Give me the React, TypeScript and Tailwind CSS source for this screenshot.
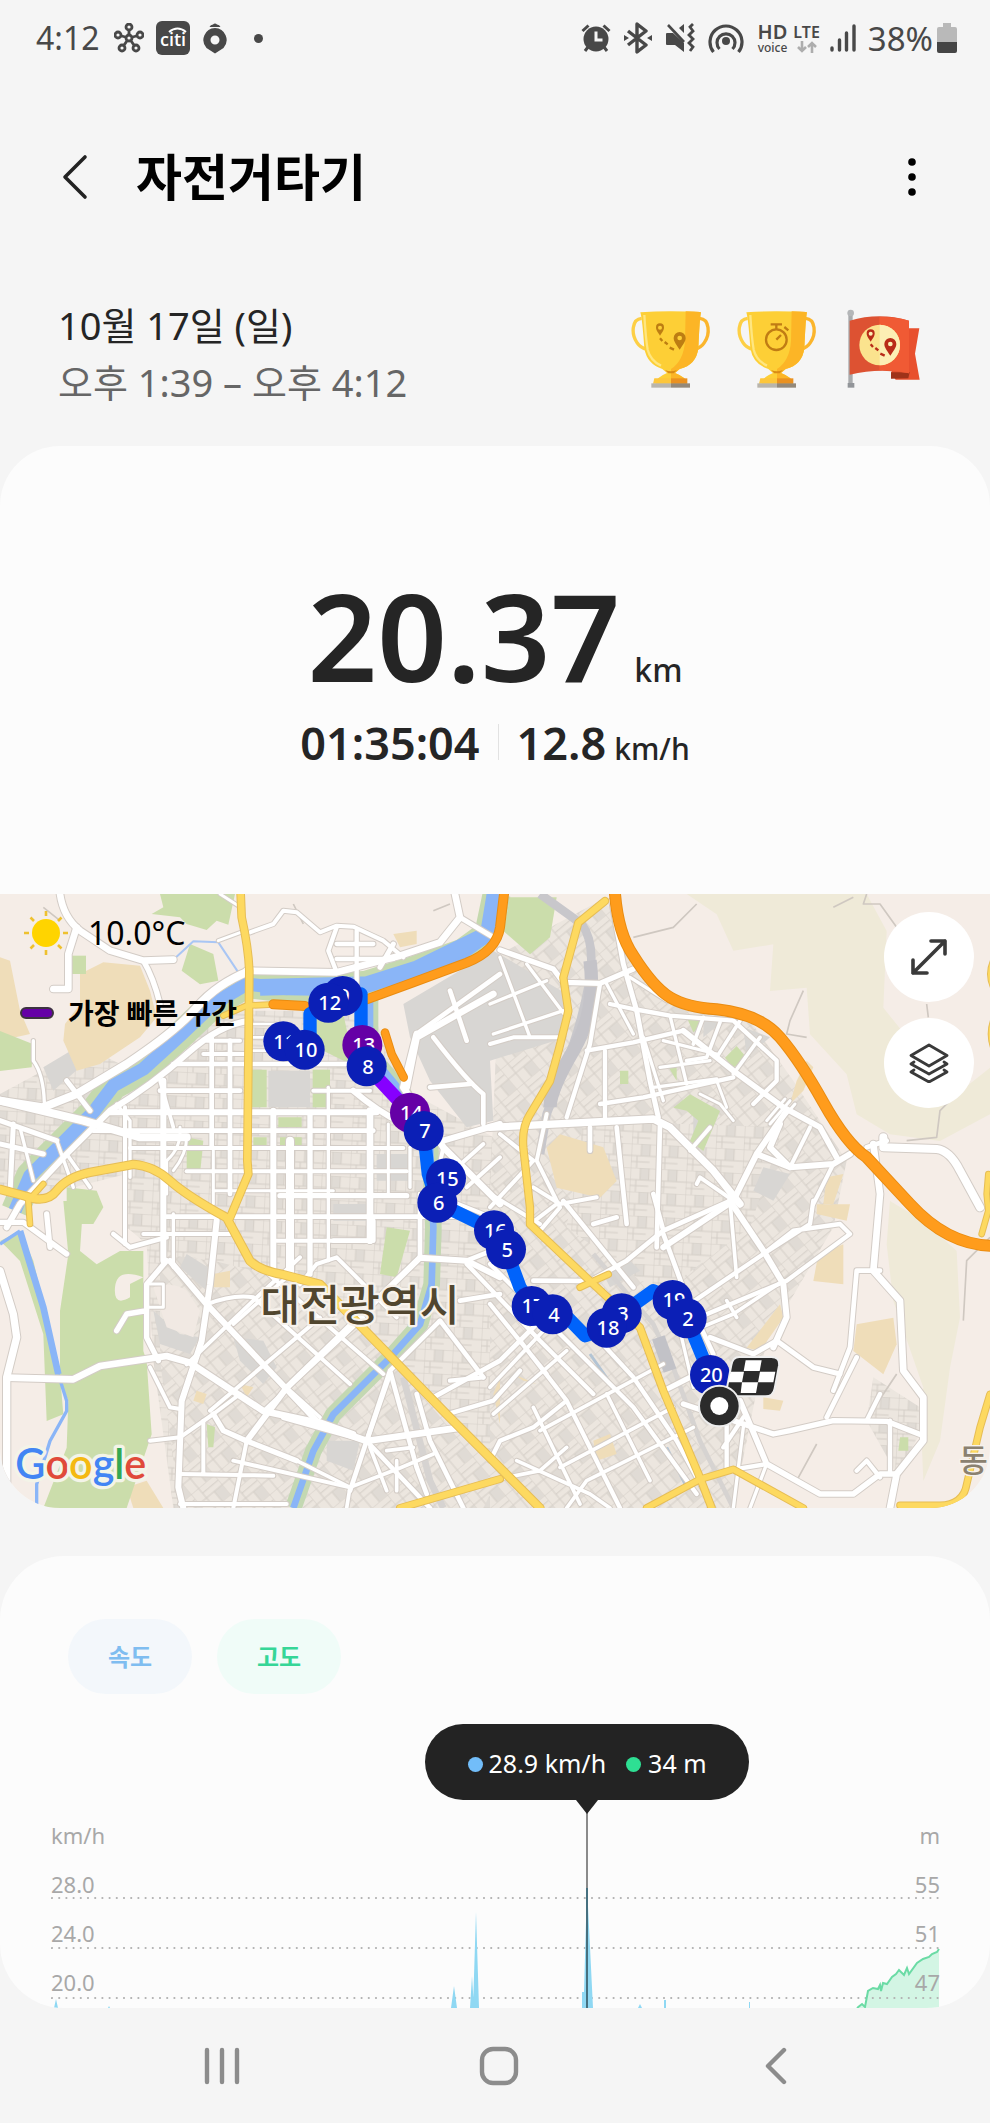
import React from "react";

const SANS = "font-['Noto_Sans','Noto_Sans_CJK_KR',sans-serif]";

/* ---------- status bar icons ---------- */

function HubIcon() {
  const tips = [[15, 4], [26, 12], [22, 25], [8, 25], [4, 12]];
  return (
    <svg viewBox="0 0 30 30" className="size-[30px]" fill="none" stroke="#484848" strokeWidth="2.8" aria-hidden="true">
      {tips.map(([x, y]) => (
        <g key={x}>
          <path d={`M15 15L${x} ${y}`} />
          <circle cx={x} cy={y} r="3" fill="#f5f5f5" />
        </g>
      ))}
      <circle cx="15" cy="15" r="3" fill="#f5f5f5" />
    </svg>
  );
}

function CitiIcon() {
  return (
    <svg viewBox="0 0 34 34" className="size-[34px]" aria-hidden="true">
      <rect width="34" height="34" rx="6" fill="#484848" />
      <text x="17" y="25" textAnchor="middle" fontSize="18" fontWeight="600" fill="#fff" fontFamily="Open Sans, sans-serif">citi</text>
      <path d="M13 11Q21.500 4 30 11" fill="none" stroke="#fff" strokeWidth="2" />
    </svg>
  );
}

function PinIcon() {
  return (
    <svg viewBox="0 0 26 32" className="h-[32px] w-[26px]" fill="#484848" aria-hidden="true">
      <path fillRule="evenodd" d="M13 6a12 12 0 0 1 8.500 20L13 31.500 4.500 26A12 12 0 0 1 13 6zm0 7.500a4.500 4.500 0 1 0 0 9 4.500 4.500 0 0 0 0-9z" />
      <path d="M7.500 5Q8.500 2.500 11 2.500 13 .5 15 2.500q2.500 0 3.500 2.500z" />
    </svg>
  );
}

function AlarmIcon() {
  return (
    <svg viewBox="0 0 30 30" className="size-[30px]" aria-hidden="true">
      <path d="M1.500 8l6-5.500M28.500 8l-6-5.500M7 24l-3 4M23 24l3 4" stroke="#484848" strokeWidth="3" />
      <circle cx="15" cy="16" r="12.500" fill="#484848" />
      <path d="M15 8.500v8.500h6.500" fill="none" stroke="#f5f5f5" strokeWidth="3" />
    </svg>
  );
}

function BluetoothIcon() {
  return (
    <svg viewBox="0 0 28 32" className="h-[32px] w-[28px]" aria-hidden="true">
      <path d="M4 9l18 14-9 7V2l9 7L4 23" fill="none" stroke="#484848" strokeWidth="3.400" strokeLinejoin="round" />
      <path d="M0 13l5 3-5 3zM28 13l-5 3 5 3z" fill="#484848" />
    </svg>
  );
}

function MuteIcon() {
  return (
    <svg viewBox="0 0 30 30" className="size-[30px]" fill="none" stroke="#484848" aria-hidden="true">
      <path d="M2 10h6L19 20v9l-9-7H2q-1 0-1-1V11q0-1 1-1zM19 1v9l-5-5z" fill="#484848" stroke="none" />
      <path d="M3 2l16 17" strokeWidth="2.600" />
      <path d="M28 1l-3 3 3 4-4 4 4 4-4 4 4 4-3 4" strokeWidth="2.800" />
    </svg>
  );
}

function HotspotIcon() {
  return (
    <svg viewBox="0 0 36 32" className="h-[32px] w-[36px]" fill="none" stroke="#484848" strokeWidth="3.200" aria-hidden="true">
      <path d="M5.500 30a16 16 0 1 1 25 0" />
      <path d="M11.500 27a9 9 0 1 1 13 0" />
      <circle cx="18" cy="19" r="4" fill="#484848" stroke="none" />
    </svg>
  );
}

function SignalIcon() {
  return (
    <svg viewBox="0 0 26 28" className="h-[28px] w-[26px]" stroke="#484848" strokeWidth="3.400" strokeLinecap="round" aria-hidden="true">
      <path d="M2 24v2M9.500 16v10M16.500 9v17M24 2v24" />
    </svg>
  );
}

function BatteryIcon() {
  return (
    <svg viewBox="0 0 20 30" className="h-[30px] w-[20px]" aria-hidden="true">
      <path d="M6 0h8v4h4a2 2 0 0 1 2 2v13H0V6a2 2 0 0 1 2-2h4z" fill="#b9b9b9" />
      <path d="M0 19h20v9a2 2 0 0 1-2 2H2a2 2 0 0 1-2-2z" fill="#454545" />
    </svg>
  );
}

function StatusBar() {
  return (
    <div className="flex h-[76px] items-center justify-between pl-[36px] pr-[33px] text-[#484848]">
      <div className="flex items-center">
        <span className="text-[32px] leading-none">4:12</span>
        <div className="ml-[14px] flex items-center gap-[12px]">
          <HubIcon />
          <CitiIcon />
          <PinIcon />
          <span className="ml-[14px] size-[9px] rounded-full bg-[#484848]" />
        </div>
      </div>
      <div className="flex items-center">
        <div className="flex items-center gap-[13px]">
          <AlarmIcon />
          <BluetoothIcon />
          <MuteIcon />
          <HotspotIcon />
        </div>
        <div className="ml-[14px] flex flex-col items-center">
          <span className="text-[20px] leading-[20px] font-semibold">HD</span>
          <span className="text-[12px] leading-[12px] font-medium">voice</span>
        </div>
        <div className="ml-[6px] flex flex-col items-center">
          <span className="text-[16px] leading-[17px] font-semibold">LTE</span>
          <svg viewBox="0 0 20 12" className="h-[12px] w-[20px]" fill="none" stroke="#adadad" strokeWidth="2.600" aria-hidden="true">
            <path d="M5 0v10M1 6l4 4 4-4M15 12V2M11 6l4-4 4 4" />
          </svg>
        </div>
        <span className="ml-[10px]"><SignalIcon /></span>
        <span className="ml-[12px] mr-[4px] text-[33px] leading-none">38%</span>
        <BatteryIcon />
      </div>
    </div>
  );
}

/* ---------- awards ---------- */

function RouteMark({ color, hole }: { color: string; hole: string }) {
  return (
    <g fill={color}>
      <path d="M87 80c-9-13-12-18-12-25a12 12 0 0 1 24 0c0 7-3 12-12 25z" />
      <circle cx="87" cy="56" r="6" fill={hole} />
      <path d="M146 122c-13-19-18-26-18-35a18 18 0 0 1 36 0c0 9-5 16-18 35z" />
      <circle cx="146" cy="87" r="7" fill={hole} />
      <path d="M87 88l7 8M101 99l9 7M116 116l13 6" stroke={color} strokeWidth="7" />
    </g>
  );
}

function Trophy({ children }: { children: React.ReactNode }) {
  return (
    <svg viewBox="0 0 240 240" className="size-[80px]" aria-hidden="true">
      <g fill="none" strokeWidth="10">
        <path d="M32 28C2 30 0 75 18 101q10 16 30 20" stroke="#fdcf45" />
        <path d="M206 28c30 2 32 47 14 73q-10 16-30 20" stroke="#fbb52c" />
      </g>
      <path d="M28 10q90-6 182 0-4 16-8 108-6 50-56 62l-14 12q36 14 36 32H74q0-18 34-32l-14-12q-46-14-54-62Q34 30 28 10z" fill="#fdcf36" />
      <path d="M164 7q30 0 46 3-4 16-8 108-6 50-56 62l-14 12q36 14 36 32h-48v-44q38-24 42-84z" fill="#fcb526" />
      <path d="M40 18q4 70 10 104 8 32 40 48" fill="none" stroke="#fff0a0" strokeWidth="7" opacity=".7" />
      <path d="M102 183q18 8 36 0l-10 10h-16z" fill="#d98c16" />
      <path d="M70 208h50v16H66z" fill="#fdc63a" />
      <path d="M120 208h49v16h-49z" fill="#ea9120" />
      <path d="M61 223h59v13H61z" fill="#b9b5ac" />
      <path d="M120 223h57v13h-57z" fill="#94897a" />
      {children}
    </svg>
  );
}

function Stopwatch() {
  return (
    <g fill="none" stroke="#c07c14" strokeWidth="7">
      <circle cx="118" cy="92" r="31" />
      <path d="M101 46h34M118 48v12M118 92l14-14M142 54l12 10" />
    </g>
  );
}

function FlagAward() {
  return (
    <svg viewBox="-10 0 240 240" className="size-[80px]" aria-hidden="true">
      <path d="M180 58h39l-13 76 14 78h-72l-14-20z" fill="#e8502e" />
      <path d="M134 190h56l-4 18-52 1z" fill="#9e3219" />
      <rect x="6" y="16" width="13" height="218" fill="#a9abad" />
      <circle cx="13" cy="12" r="10" fill="#b4b6b8" />
      <path d="M4 222h20v14H4z" fill="#929599" />
      <path d="M10 35q90-26 178 0v158q-88-18-178 4z" fill="#dd5232" />
      <path d="M99 24q46-2 89 11v158q-44-10-89-9z" fill="#f05a34" />
      <circle cx="100" cy="108" r="61" fill="#fbe38e" />
      <path d="M100 47a61 61 0 0 1 0 122z" fill="#fceeb4" />
      <g transform="translate(-14 18)">
        <RouteMark color="#b92b18" hole="#fceeb4" />
      </g>
    </svg>
  );
}

/* ---------- map ---------- */

type Road = [path: string, width: number];

const streets: Road[] = [
  // downtown grid
  ["M375 640V1050", 12], ["M490 560V1100", 18], ["M520 960V1120", 10], ["M635 430V760", 14], ["M690 440V900", 14],
  ["M640 770V930", 9], ["M820 650V1130", 18], ["M870 740V1140", 24], ["M930 660V1140", 16], ["M985 580V1100", 10],
  ["M1110 650V1040", 20], ["M1165 690V900", 9], ["M1230 760V880", 10],
  ["M520 510H1040", 14], ["M480 590H720", 14], ["M940 590H1110", 12], ["M330 655H1130", 18], ["M280 710H1120", 14],
  ["M390 762H1210", 12], ["M560 832H1220", 12], ["M640 890H1000", 9], ["M840 905H1220", 16], ["M500 968H1420", 14],
  ["M430 1020H690", 12], ["M830 1040H1110", 12], ["M620 440H720M610 480H735", 12], ["M760 390H830M760 430H800M760 470H800", 8],
  // north-west
  ["M180 0Q190 70 240 110L330 170 430 200 520 197", 20], ["M430 200Q460 250 480 330", 16], ["M230 100L205 180V285H160", 20],
  ["M100 440V500Q130 540 133 625", 10], ["M740 230L1010 235 1200 185 1320 145 1380 70 1365 0", 20],
  ["M750 115L820 90 850 50 890 55 960 115 1010 95 1060 98 1150 140 1210 190", 12], ["M1010 100L985 170 1010 235M1070 110V270M1010 150H1120M1010 195H1180", 13],
  ["M1380 70L1480 130M1140 220L1180 150", 15], ["M660 0L722 40M722 115L655 140", 9],
  ["M750 230Q650 270 590 340T380 510L230 600 130 640 0 620", 24], ["M750 380Q660 390 560 480T330 650L200 780 60 930 20 1000", 18],
  ["M0 620L250 680 420 730 560 730", 24], ["M0 680L170 740M0 750L130 780M40 690L30 900M200 560L270 650", 15],
  ["M350 630L390 680V850M60 700L100 860M170 740L220 880", 10], ["M200 780L270 880M480 560L520 700", 11],
  ["M560 730Q560 780 520 830M540 700Q545 760 500 800V900", 9],
  ["M1060 590Q1130 650 1210 690T1330 740L1500 690", 18], ["M1220 580L1250 430 1480 300M1250 420L1210 580 1330 760 1500 930", 20],
  ["M1250 420L1500 240M1300 430Q1400 560 1450 600V690M1350 290L1400 440M1290 580L1410 570", 14], ["M1330 760L1300 900 1500 980M1360 830L1450 750M1400 880L1500 790", 12],
  // west and south-west
  ["M0 1130L40 1260 50 1330 20 1450 20 1842", 22], ["M0 985H70L200 1080M140 960L150 1060", 16], ["M340 1020L390 1060 500 1030", 14],
  ["M20 1451L220 1456 300 1416 500 1386 570 1406 790 1551 930 1581 1100 1641 1380 1601", 20],
  ["M650 980L630 1171 605 1341 545 1521 535 1780 550 1842", 18], ["M510 1101L620 1231 950 1581 1060 1620", 18],
  ["M500 1100L440 1171V1331L475 1400M350 1310L380 1260 440 1250", 16], ["M450 1170H490V1240H440", 9],
  ["M450 1420L510 1540 540 1545M450 1640L540 1630 640 1560 720 1500", 12], ["M640 1560L670 1610 740 1641 890 1700", 16],
  ["M610 1580V1740M740 1641L700 1842M540 1740L820 1745M700 1700L1050 1780M540 1830H860", 12],
  ["M740 1641L860 1481 1260 1091 1400 1100 1500 1150", 18], ["M560 1411L760 1220 900 1090M630 1550L960 1271", 12],
  ["M620 1231Q700 1200 760 1210L1050 1470M760 1100L1150 1440M900 1171L950 1110 1010 1090 1190 1270", 12],
  ["M700 1290L860 1150M790 1551L1090 1271M860 1481L960 1570", 11], ["M850 1571L1100 1641 1290 1842M1100 1641L1170 1440", 14],
  ["M1170 1430L1250 1720 1280 1800M1250 1500L1290 1640 1390 1842M1050 1790L1170 1430 1320 1280 1450 1450", 14],
  ["M1050 1780L1200 1722 1300 1680M1110 1660L1160 1790M890 1700L1050 1780 1040 1842M1160 1670L1240 1660M1190 1700V1790", 11],
  ["M1260 900V1091M1120 980V1040H1000M1400 1100L1500 1060M1380 1220L1500 1200M1300 1510L1500 1400 1640 1260", 14],
  ["M1400 1110L1620 1340 1780 1500M1340 1561L1480 1520 1560 1430M1450 1450L1350 1460", 13],
  // north-east
  ["M1500 168L1660 225 1690 265 1800 268 1900 225", 16], ["M1470 450L1540 430 1690 430", 12], ["M1470 330L1640 260M1480 420L1690 350M1500 190L1590 430M1580 210L1700 370", 10],
  ["M1835 20L1870 210 1910 350 1950 560 1975 670", 15], ["M1800 270L1770 450 1700 670", 13], ["M1830 330L1900 345 2010 365 2200 380 2330 500 2330 560 2260 630", 13],
  ["M1760 470L1900 445 2050 410M1815 470V670M1800 630L1930 610 2200 550", 13], ["M1470 700L1960 675 2010 700 2140 830 2220 930", 22],
  ["M1890 250L2000 320M1820 270L1900 420M1930 430L1990 620M2010 365L2060 570M1990 440L2150 480M1980 520L2130 500M1960 580L2150 555", 10],
  ["M2050 410L2200 530 2350 640 2460 700 2510 790", 17], ["M2110 370L2080 450M2160 385L2120 490 2060 500M2220 380L2150 490M2280 430L2200 540", 11],
  ["M2360 650L2270 780 2200 920 1990 1060M2340 690L2310 760 2370 820M2270 780L2370 820 2500 810 2550 780", 18], ["M2430 700L2370 820M2500 810L2440 930", 12],
  ["M2100 600L2160 630 2200 680M2150 560L2180 640", 9], ["M1850 700L1880 990M1980 690L1970 1060M1770 700V770", 14], ["M2070 770L2130 700M2200 920L2100 850 2090 870", 12],
  ["M2620 750L2640 900 2620 1130 2700 1220 2710 1430 2770 1510V1640L2690 1740 2670 1842", 20], ["M2650 730V760L2810 765Q2850 770 2880 830L2940 940", 24],
  ["M2600 760L2660 740M2570 1130H2640M2570 1130L2550 1360 2500 1490M2570 1390L2480 1570", 14],
  // interchange
  ["M2310 690L2370 620M2325 700L2385 630M2300 680L2355 615", 9],
  // south-east
  ["M1470 900L1620 990M1590 991L1670 930M1640 660L1610 800 1680 940 1620 1010M1500 720L1600 800 1470 940M1600 880L1680 930 1790 910", 12],
  ["M1600 1160L1770 1161 1880 1100 1990 1010 2190 921M1690 921L1900 1180M1990 1010L1960 900M1780 990L1850 970M1990 1020L2060 1210 2140 1380", 14],
  ["M2190 921L2290 1070 2350 1170 2360 1270 2320 1360", 18], ["M2010 1270L2290 1080 2430 990 2440 920M2290 1080L2380 1010 2520 990 2550 1020 2360 1160 2050 1290", 13],
  ["M2080 1310L2200 1260 2350 1160M2190 921L2210 1150M2210 1270L2180 1220", 11], ["M2130 1330L2260 1380 2330 1340 2440 1420 2520 1440", 15],
  ["M1990 1491L2070 1450M2050 1530L2320 1620 2370 1610 2500 1580 2660 1582 2770 1625", 16], ["M2220 1520L2300 1710 2460 1800 2560 1800 2640 1740 2690 1740", 17],
  ["M2180 1590V1730L2300 1710M2170 1660L2230 1570M2600 1580L2640 1500M2670 1580V1740M2570 1730L2600 1700 2640 1750", 13],
  ["M1470 1110L1780 1420 1900 1540 2090 1800M1780 1320L1900 1450 2030 1640 2140 1842", 13], ["M1560 1340L1700 1520 1860 1842M1470 1230L1640 1440M1700 1520L1600 1600 1500 1640 1470 1700", 13],
  ["M1470 1480L1640 1300M1480 1560L1700 1370M1620 1610L1860 1480 1990 1410M1680 1720L2020 1540M1700 1842L1760 1760 2080 1600", 11],
  ["M1600 1540L1740 1830M1820 1500L1950 1760M1550 1700L1770 1800 1830 1842M1470 1760L1620 1730 1700 1660", 11],
  ["M2040 1310L2080 1480M2230 1600L2200 1842M2300 1710L2250 1842", 10],
];

const arterials: Road[] = [
  ["M722 0L725 70Q745 160 748 230L742 800 745 840 690 971", 20],
  ["M0 886L75 906Q140 930 170 890T270 835L400 811Q460 815 510 860T680 971L750 1101Q780 1130 850 1142L960 1171 1340 1561 1620 1842", 22],
  ["M1200 1842L1500 1755", 18],
  ["M1815 21L1735 86 1690 251 1705 351Q1680 460 1650 561L1590 661Q1565 700 1570 761L1590 941V991L1770 1161 1920 1301 1990 1491 2100 1751 2135 1842", 19],
  ["M1940 1842L2100 1756 2200 1726 2410 1842", 17],
  ["M1825 1141L1770 1166 1740 1180", 16],
  ["M2970 1501L2940 1601 2900 1771Q2890 1832 2820 1834H2700", 17],
  ["M90 990L85 920 130 870M670 365L740 335 820 331", 14],
  ["M2980 200Q2962 240 2980 280M2980 380Q2966 420 2980 460M2965 840L2960 900 2965 950 2945 1020", 14],
];

const highways: Road[] = [
  ["M1845 0Q1855 120 1900 185Q1960 280 2010 310T2150 346Q2280 360 2340 430Q2400 500 2470 625T2600 790L2730 930Q2840 1050 2970 1055", 30],
  ["M820 331L915 336M1100 316L1240 265 1400 206Q1490 170 1500 100L1512 0", 24],
  ["M1155 416L1175 481 1211 550", 20],
];

const parks = [
  "M190 921H250L240 1071 290 1111 360 1071H430V1371L440 1401 455 1621 380 1842H130L200 1661 205 1521 180 1461V1251L205 1081z",
  "M0 1041L60 1011 100 1100 180 1441 190 1561 140 1581 130 1321 60 1101 20 1060z",
  "M480 0H705L685 92 650 80 620 108 560 90 540 70 455 60 490 40z",
  "M570 150L640 180 655 260 600 271 545 230z",
  "M0 411L100 451 95 520 0 531z", "M215 185H258V240H215z", "M200 880L290 890 310 940 280 990H200z",
  "M755 527H800V640H740z", "M938 527H990V640H938z", "M925 330L1030 360 1060 500 1040 505 970 470 930 400z",
  "M1530 10H1670L1650 130 1590 181 1510 111z", "M2020 641L2070 601 2160 651 2110 771 2070 741 2095 680 2060 650z",
  "M2175 491L2210 456 2240 491 2200 521z", "M1160 1000L1230 1010 1190 1150 1140 1140z", "M620 1590L645 1600 640 1660 625 1660z",
  "M560 730L610 740 600 840 560 830z", "M835 670H905V700H835zM760 730H800V755H760zM840 730H905V755H840z", "M2060 370H2100V400L2080 415z",
  "M1860 530H1885V570H1860zM2000 510H2030V560z", "M2700 1630H2725V1670H2695z",
];

const sands = [
  "M240 240L310 205 420 215 450 290 470 370 420 430 300 510 230 530 190 440 195 390 240 330z",
  "M0 190L30 200 60 350 90 420 0 440z", "M1640 761L1680 721 1810 760 1850 861 1800 911 1670 881z",
  "M2450 931H2550L2540 980 2450 960z", "M2455 1081L2530 1051V1171L2440 1161z", "M2240 1361L2340 1231 2350 1271 2280 1371z",
  "M2570 1291L2680 1271 2690 1351 2650 1441 2560 1371z", "M2480 850L2530 840 2500 930 2470 930z", "M2420 500L2440 520 2410 590 2370 630 2390 560z",
  "M380 1780L440 1760 490 1842H400z", "M1180 120L1250 110V150L1200 160z", "M640 1140L690 1130V1180H640zM720 1470L760 1480 740 1510zM590 1490L620 1500 610 1530 580 1520z",
  "M1780 1640L1830 1620 1850 1680 1790 1700zM1480 1500L1500 1450V1590z", "M1610 1470L1570 1460 1540 1440z", "M2290 1510L2350 1520 2340 1550 2290 1545z",
];

const terrain = [
  "M2060 0H2600L2660 111 2650 341 2730 441 2710 561 2870 601 2970 521V661L2820 741 2670 721 2570 661 2540 541 2430 421 2420 281 2310 291 2320 151 2200 170 2150 61z",
  "M2670 921L2770 981 2870 1071 2880 1271 2850 1421 2820 1641 2770 1761 2760 1521 2770 1481 2680 1221 2660 1051z",
];

const urban: [string, string][] = [
  ["M380 560L560 400 740 250 760 350 1110 350 1240 600 1500 740 1500 1842 520 1842 460 1400 440 1050 380 1000z", "url(#blocks)"],
  ["M0 600L260 460 380 520 380 840 60 920 0 880z", "url(#blocks)"],
  ["M480 1080L640 1100 960 1180 1500 1740 1450 1842H540L480 1400z", "url(#blocksTilted)"],
  ["M1500 180L1800 20 1860 60 1900 210 2080 350 2250 380 2380 560 2540 800 2500 1000 2300 1340 2200 1842H1470V900z", "url(#blocksTilted)"],
  ["M1750 680L2350 700 2250 1000 1980 1200 1700 1000z", "url(#blocks)"],
  ["M2620 1450L2760 1540V1620L2690 1740 2600 1580z", "url(#blocks)"],
];

const plazas = [
  "M1210 330L1480 170 1700 300V430L1470 500 1480 680 1400 700 1290 560 1230 430z", "M805 530H930V640H805z", "M700 1330L790 1340 830 1420 790 1470 720 1400z",
  "M560 1080L640 1130 620 1190 540 1120z", "M1000 930H1100V980H1000zM1130 780H1230V860H1130z", "M2080 650L2130 640 2120 710 2080 720z",
  "M2230 400L2310 430 2240 490zM2110 370L2170 380 2110 430z", "M2290 820L2370 840 2320 920 2260 890z", "M460 1250L540 1320 600 1330 570 1380 480 1350z",
  "M130 520L230 460 240 520 160 590z", "M980 1640L1080 1640 1060 1730 980 1700z", "M1810 1140L1880 1090 1920 1130 1830 1180z",
];

type Marker = { label: string; x: number; y: number; fast?: boolean };

const markers: Marker[] = [
  { label: "9", x: 1028, y: 306 }, { label: "12", x: 985, y: 326 },
  { label: "11", x: 850, y: 442 }, { label: "10", x: 914, y: 467 },
  { label: "13", x: 1087, y: 453, fast: true }, { label: "8", x: 1100, y: 517 },
  { label: "14", x: 1230, y: 656, fast: true }, { label: "7", x: 1271, y: 711 },
  { label: "15", x: 1338, y: 853 }, { label: "6", x: 1312, y: 926 },
  { label: "16", x: 1482, y: 1009 }, { label: "5", x: 1518, y: 1066 },
  { label: "17", x: 1595, y: 1236 }, { label: "4", x: 1658, y: 1261 },
  { label: "3", x: 1865, y: 1258 }, { label: "18", x: 1820, y: 1301 },
  { label: "19", x: 2018, y: 1218 }, { label: "2", x: 2060, y: 1273 },
  { label: "20", x: 2130, y: 1443 },
];

const river = "M1490 0L1465 120 1390 175 1250 225 1100 272 950 285 860 284 740 270 640 330 540 425 430 525 340 575 280 655 180 755 90 845 45 950";
const stream = "M1110 300V480L1210 600 1290 740 1300 1001 1295 1171 1260 1291 1180 1381 1000 1561 940 1671 880 1842";

function RoadLayer({ roads, casing, fill, edge }: { roads: Road[]; casing: string; fill: string; edge: number }) {
  return (
    <g fill="none" strokeLinejoin="round" strokeLinecap="round">
      <g stroke={casing}>{roads.map(([d, w]) => <path key={d} d={d} strokeWidth={w + edge} />)}</g>
      <g stroke={fill}>{roads.map(([d, w]) => <path key={d} d={d} strokeWidth={w} />)}</g>
    </g>
  );
}

function MapCanvas() {
  return (
    <svg viewBox="0 0 2970 1842" preserveAspectRatio="xMidYMid slice" className="block h-[614px] w-full" role="img" aria-label="대전광역시 자전거 경로 지도">
      <defs>
        <pattern id="blocks" width="84" height="72" patternUnits="userSpaceOnUse" patternTransform="rotate(3)">
          <rect width="84" height="72" fill="#ece6df" />
          <rect x="30" y="0" width="26" height="36" fill="#e0dbd5" />
          <path d="M0 0H84M0 36H84M0 0V72M30 0V36M56 0V36M18 36V72M0 54H56" stroke="#d5cfc8" strokeWidth="3" fill="none" />
        </pattern>
        <pattern id="blocksTilted" width="90" height="76" patternUnits="userSpaceOnUse" patternTransform="rotate(-40)">
          <rect width="90" height="76" fill="#ece6df" />
          <rect x="60" y="38" width="30" height="38" fill="#e0dbd5" />
          <path d="M0 0H90M0 38H90M0 0V76M30 0V76M60 38V76M30 20H90" stroke="#d5cfc8" strokeWidth="3" fill="none" />
        </pattern>
      </defs>
      <rect width="2970" height="1842" fill="#f5ede7" />
      {urban.map(([d, fill]) => <path key={d} d={d} fill={fill} />)}
      <g fill="#efead8">{terrain.map((d) => <path key={d} d={d} />)}</g>
      <g fill="#d8d6d3">{plazas.map((d) => <path key={d} d={d} />)}</g>
      <g fill="#efddb9">{sands.map((d) => <path key={d} d={d} />)}</g>
      <g fill="#cbddab">{parks.map((d) => <path key={d} d={d} />)}</g>
      <path d="M460 1180Q520 1160 560 1190L600 1250 580 1330 500 1300z" fill="#f1e9e3" />
      <path d="M430 1150Q350 1120 345 1180T390 1210V1170L430 1150z" fill="#f5ede7" />

      <g fill="none" strokeLinejoin="round">
        <path d="M1620 0L1745 90Q1790 150 1765 280T1690 530L1640 660 1620 780" stroke="#c8c7cb" strokeWidth="26" />
        <path d="M1770 200Q1790 350 1720 470T1650 640" stroke="#c4c3c8" strokeWidth="40" />
        <path d="M1780 1080L1960 1291 2020 1421 2100 1641 2200 1842" stroke="#d6d3d1" strokeWidth="14" />
        <path d="M1975 1330L2010 1430" stroke="#c2c2c7" strokeWidth="40" />
        <path d="M1210 1450L1290 1760 1330 1842" stroke="#d6d3d1" strokeWidth="20" />
        <path d="M2090 30L2020 100 1900 130M2410 290L2370 380 2360 420 2420 430M2600 0L2590 30 2640 30 2690 100M2500 40L2560 10M2720 740L2810 730 2820 650 2880 590M2780 330L2785 370M2970 1030L2900 1100 2890 1280M2690 1440L2610 1560M2450 1650L2390 1760M880 30L910 90M1300 50L1350 30M130 40L180 80" stroke="#cfc8c1" strokeWidth="5" />
      </g>

      <g fill="none" strokeLinejoin="round">
        <path d={river} stroke="#c5d9ae" strokeWidth="84" />
        <path d={stream} stroke="#c3d8b2" strokeWidth="50" />
        <path d={river} stroke="#8ab5f7" strokeWidth="40" />
        <path d="M1485 0L1465 120 1250 225 1100 272 780 280" stroke="#8ab5f7" strokeWidth="50" />
        <path d={stream} stroke="#8ab5f7" strokeWidth="20" />
        <path d="M60 1011L90 1110 130 1240 175 1441" stroke="#8ab5f7" strokeWidth="20" />
        <path d="M0 1050L60 1011M175 1441L200 1521 200 1551 150 1641 110 1771V1842" stroke="#8ab5f7" strokeWidth="10" />
        <path d="M520 197L580 142 655 145 715 235" stroke="#a9c6f4" strokeWidth="6" />
        <path d="M2000 1660L2060 1780M1770 1380L1840 1480" stroke="#b3c4d4" strokeWidth="9" />
      </g>

      <RoadLayer roads={streets} casing="#d3ccc6" fill="#ffffff" edge={6} />
      <RoadLayer roads={arterials} casing="#e6bd55" fill="#fdd960" edge={6} />
      <RoadLayer roads={highways} casing="#e98c12" fill="#ff9c1c" edge={6} />

      <g fill="none" strokeWidth="40" strokeLinejoin="round">
        <path d="M850 442L930 430V360L985 326 1083 300V453L1100 517" stroke="#0063fb" />
        <path d="M1271 711L1285 840 1312 926 1482 1009 1518 1066 1560 1180 1595 1236 1700 1268 1755 1325 1820 1301 1865 1258 1960 1190 2018 1218 2060 1273 2130 1443 2158 1536" stroke="#0063fb" />
        <path d="M1100 517L1230 656" stroke="#8600ff" />
      </g>

      <text x="1080" y="1280" textAnchor="middle" fontFamily="Noto Sans CJK KR, sans-serif" fontSize="130" fontWeight="500" fill="#51462f" stroke="#f7f2ec" strokeWidth="14" strokeLinejoin="round" paintOrder="stroke">대전광역시</text>
      <text x="2920" y="1734" textAnchor="middle" fontFamily="Noto Sans CJK KR, sans-serif" fontSize="94" fontWeight="500" fill="#8b8170" stroke="#f7f2ec" strokeWidth="8" paintOrder="stroke">동</text>

      {markers.map((m) => (
        <g key={m.label}>
          <circle cx={m.x} cy={m.y} r="60" fill={m.fast ? "#6500a6" : "#0b1fb6"} />
          <text x={m.x + 4} y={m.y + 22} textAnchor="middle" fontFamily="Noto Sans, sans-serif" fontSize="60" fontWeight="500" fill="#fff">{m.label}</text>
        </g>
      ))}

      <g>
        <path d="M2218 1389h96q26 0 23 26l-13 68q-4 24-28 24h-94q-26 0-21-26l13-68q4-24 24-24z" fill="#2b2b2b" stroke="#eee" strokeWidth="6" />
        <path d="M2237 1399h48l-6 32h-48zM2192 1433h40l-6 32h-42zM2280 1433h46l-6 32h-46zM2226 1465h48l-6 32h-46z" fill="#fff" />
        <circle cx="2158" cy="1536" r="61" fill="#2b2b2b" stroke="#eee" strokeWidth="6" />
        <circle cx="2158" cy="1536" r="27" fill="#fff" />
      </g>

      <text x="46" y="1755" fontFamily="Lato, sans-serif" fontSize="124" fontWeight="600" stroke="#f3f4e8" strokeWidth="20" strokeLinejoin="round" paintOrder="stroke">
        <tspan fill="#4285f4">G</tspan>
        <tspan fill="#e04a3a">o</tspan>
        <tspan fill="#f4b912">o</tspan>
        <tspan fill="#4285f4">g</tspan>
        <tspan fill="#34a853">l</tspan>
        <tspan fill="#e04a3a">e</tspan>
      </text>
    </svg>
  );
}

function SunIcon() {
  return (
    <svg viewBox="0 0 44 44" className="size-[44px]" aria-hidden="true">
      <circle cx="22" cy="22" r="14" fill="#ffd400" />
      <path d="M22 0v5M22 39v5M0 22h5M39 22h5M6.500 6.500l3.500 3.500M34 34l3.500 3.500M6.500 37.500L10 34M34 10l3.500-3.500" stroke="#eec12f" strokeWidth="2.600" />
    </svg>
  );
}

function RouteMap() {
  return (
    <div className="relative">
      <MapCanvas />
      <div className="absolute left-0 top-[14px] flex flex-col gap-[33px] text-black">
        <div className="flex h-[50px] items-center gap-[20px] pl-[24px]">
          <SunIcon />
          <span className="text-[32px] leading-none">10.0°C</span>
        </div>
        <div className="flex h-[44px] items-center gap-[14px] pl-[20px]">
          <span className="h-[12px] w-[34px] rounded-full border-2 border-[#3d3340] bg-[#6500a6]" />
          <span className="text-[28px] leading-none font-bold">가장 빠른 구간</span>
        </div>
      </div>
      <div className="absolute right-[16px] top-[18px] flex flex-col gap-[16px]">
        <button type="button" aria-label="지도 확대" className="flex size-[90px] items-center justify-center rounded-full bg-white">
          <svg viewBox="0 0 36 36" className="size-[36px]" fill="none" stroke="#3a3a3a" strokeWidth="3.600" strokeLinejoin="round" strokeLinecap="round" aria-hidden="true">
            <path d="M2 34L34 2M20 2h14v13M2 21v13h14" />
          </svg>
        </button>
        <button type="button" aria-label="지도 레이어" className="flex size-[90px] items-center justify-center rounded-full bg-white">
          <svg viewBox="0 0 40 40" className="size-[40px]" fill="none" stroke="#3a3a3a" strokeWidth="2.800" strokeLinejoin="round" strokeLinecap="round" aria-hidden="true">
            <path d="M20 2L38 12.500 20 23 2 12.500zM5 19l-3 2 18 10 18-10-3-2M5 27l-3 2 18 10 18-10-3-2" />
          </svg>
        </button>
      </div>
    </div>
  );
}

/* ---------- chart ---------- */

const axis = [["km/h", "m"], ["28.0", "55"], ["24.0", "51"], ["20.0", "47"]];

const elevation = "M806 208L811 204 814 207 817 191 822 188 827 189 829 185 830 191 832 183 836 184 841 177 845 174 848 170 853 175 856 168 858 174 866 163 872 159 878 157 881 154 886 152 888 149";

function Chart() {
  return (
    <div className="relative ml-[51px] mr-[50px]">
      <svg viewBox="0 0 889 208" preserveAspectRatio="none" className="absolute inset-0 size-full" aria-hidden="true">
        <path d={`${elevation}V208z`} fill="#d3f5e4" />
        <path d="M1 98H889M1 148H889M1 198H889" stroke="#b0b0b0" strokeWidth="2.200" strokeLinecap="round" strokeDasharray="0 7.200" />
        <path d={elevation} fill="none" stroke="#6bdba5" strokeWidth="2" />
        <path d="M3 208L5 199 7 208zM400 208L403 186 406 208zM419 208L421 176 423 208zM422 208L425 112 428 208zM531 208V192H533L536 86 542 208zM587 208L589 204 591 208zM613 208V200H615V208zM698 208V202H699V208zM57 208L58 206 59 208z" fill="#8fd8f3" />
        <path d="M536 12V208" stroke="#666" strokeWidth="1.500" />
        <path d="M536 88V208" stroke="#46707f" strokeWidth="2" />
      </svg>
      <div className="relative pt-[12px] text-[22px] text-[#a8a8a8]">
        {axis.map(([speed, height]) => (
          <div key={speed} className="flex h-[49px] items-center justify-between pb-[2px]">
            <span>{speed}</span>
            <span>{height}</span>
          </div>
        ))}
      </div>
      <div className="absolute bottom-full left-[60.3%] flex h-[76px] w-[324px] -translate-x-1/2 items-center justify-center rounded-full bg-[#232323] pt-[4px] text-[25px] whitespace-nowrap text-white">
        <span className="mr-[6px] size-[15px] rounded-full bg-[#72bdf9]" />
        <span>28.9 km/h</span>
        <span className="ml-[20px] mr-[7px] size-[15px] rounded-full bg-[#2edf93]" />
        <span>34 m</span>
        <svg viewBox="0 0 22 14" className="absolute left-1/2 top-full h-[14px] w-[22px] -translate-x-1/2" aria-hidden="true">
          <path d="M0 0H22L11 14z" fill="#232323" />
        </svg>
      </div>
    </div>
  );
}

/* ---------- page ---------- */

export default function App() {
  return (
    <div className={`min-h-screen bg-[#f5f5f5] text-[#252525] ${SANS}`}>
      <StatusBar />

      <header className="flex h-[202px] items-center justify-between pl-[56px] pr-[56px]">
        <div className="flex items-center gap-[40px]">
          <button type="button" aria-label="뒤로" className="flex h-[60px] w-[40px] items-center">
            <svg viewBox="0 0 32 46" className="h-[46px] w-[32px]" fill="none" stroke="#222" strokeWidth="3.600" strokeLinecap="round" strokeLinejoin="round" aria-hidden="true">
              <path d="M29 3L9 23 29 43" />
            </svg>
          </button>
          <h1 className="text-[50px] leading-none font-bold text-black">자전거타기</h1>
        </div>
        <button type="button" aria-label="더보기" className="flex h-[60px] w-[44px] items-center justify-center">
          <svg viewBox="0 0 8 38" className="h-[38px] w-[8px]" aria-hidden="true">
            <circle cx="4" cy="4" r="3.800" /><circle cx="4" cy="19" r="3.800" /><circle cx="4" cy="34" r="3.800" />
          </svg>
        </button>
      </header>

      <section className="flex items-start justify-between pb-[35px] pl-[58px] pr-[67px] pt-[19px]">
        <div className="text-[38px] leading-[57px]">
          <p>10월 17일 (일)</p>
          <p className="text-[#666]">오후 1:39 – 오후 4:12</p>
        </div>
        <div className="mt-[12px] flex gap-[26px]">
          <Trophy><RouteMark color="#bd7d12" hole="#fdcf36" /></Trophy>
          <Trophy><Stopwatch /></Trophy>
          <FlagAward />
        </div>
      </section>

      <main>
        <section className="overflow-hidden rounded-[60px] bg-[#fcfcfc]">
          <div className="flex flex-col items-center pb-[122px] pt-[130px]">
            <div className="flex items-baseline gap-[14px]">
              <span className="text-[122px] leading-[118px] font-semibold">20.37</span>
              <span className="text-[32px] leading-none font-medium">km</span>
            </div>
            <div className="mt-[18px] flex h-[60px] items-center">
              <span className="text-[45px] leading-none font-semibold">01:35:04</span>
              <span className="mx-[18px] h-[36px] w-px bg-[#e2e2e2]" />
              <span className="flex items-baseline gap-[8px]">
                <span className="text-[45px] leading-none font-semibold">12.8</span>
                <span className="text-[30px] leading-none font-medium">km/h</span>
              </span>
            </div>
          </div>
          <RouteMap />
        </section>

        <section className="mt-[48px] overflow-hidden rounded-[64px] bg-[#fcfcfc] pt-[63px]">
          <div className="mb-[106px] flex gap-[25px] pl-[68px]">
            <button type="button" className="h-[75px] w-[124px] rounded-full bg-[#f3f7fb] text-[24px] font-bold text-[#7fbdf0]">속도</button>
            <button type="button" className="h-[75px] w-[124px] rounded-full bg-[#f0fcf8] text-[24px] font-bold text-[#36d697]">고도</button>
          </div>
          <Chart />
        </section>
      </main>

      <nav className="grid h-[115px] grid-cols-3 pl-[83px] pr-[76px]">
        <button type="button" aria-label="최근 앱" className="flex items-center justify-center">
          <svg viewBox="0 0 36 38" className="h-[38px] w-[36px]" stroke="#8c8c8c" strokeWidth="4.400" strokeLinecap="round" aria-hidden="true">
            <path d="M3 3v32M18 3v32M33 3v32" />
          </svg>
        </button>
        <button type="button" aria-label="홈" className="flex items-center justify-center">
          <svg viewBox="0 0 40 40" className="size-[40px]" fill="none" stroke="#8c8c8c" strokeWidth="4.400" aria-hidden="true">
            <rect x="3" y="3" width="34" height="34" rx="11" />
          </svg>
        </button>
        <button type="button" aria-label="이전" className="flex items-center justify-center">
          <svg viewBox="0 0 22 38" className="h-[38px] w-[22px]" fill="none" stroke="#8c8c8c" strokeWidth="4.400" strokeLinecap="round" strokeLinejoin="round" aria-hidden="true">
            <path d="M19 3L3 19 19 35" />
          </svg>
        </button>
      </nav>
    </div>
  );
}
